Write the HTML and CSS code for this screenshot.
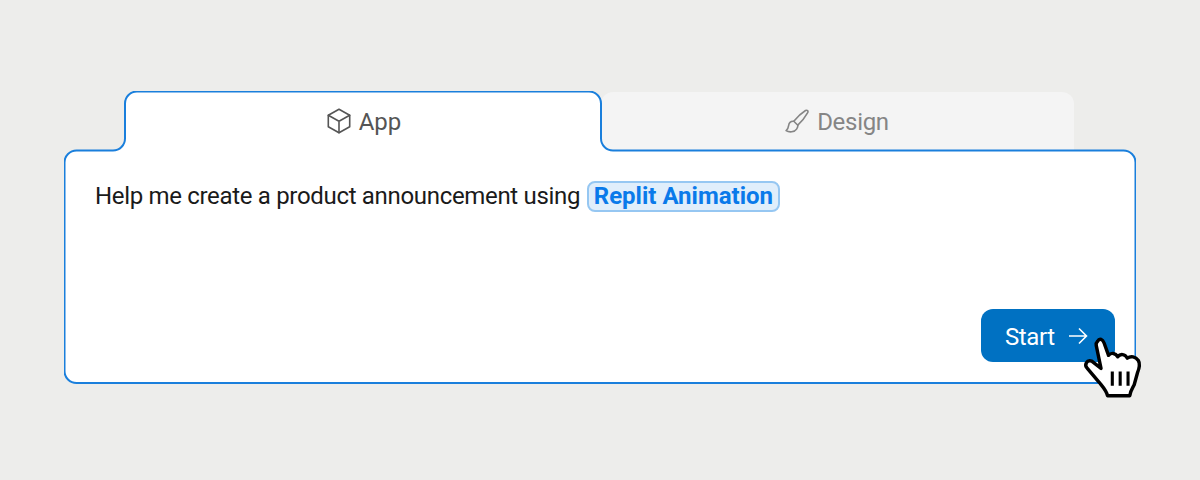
FILE: index.html
```html
<!DOCTYPE html>
<html lang="en">
<head>
<meta charset="utf-8">
<title>Replit prompt</title>
<link rel="stylesheet" href="styles.css">
</head>
<body>
<main class="stage">
  <svg class="frame" width="1072" height="294" viewBox="0 0 1072 294" aria-hidden="true">
    <path class="frame-line" d="M.5 71.5a12 12 0 0 1 12-12H49a12 12 0 0 0 12-12V12.5a12 12 0 0 1 12-12H525a12 12 0 0 1 12 12V47.5a12 12 0 0 0 12 12H1059.500a12 12 0 0 1 12 12V280a12 12 0 0 1-12 12H12.500a12 12 0 0 1-12-12Z"/>
  </svg>
  <nav class="tabs">
    <div class="tab tab-active">
      <svg class="tab-icon" width="24" height="26" viewBox="0 0 24 26" aria-hidden="true">
        <path d="M12 1.300 22.700 7.300V18.700L12 24.700 1.300 18.700V7.300Z"/>
        <path d="M1.300 7.300 12 13.200 22.700 7.300M12 13.200V24.700"/>
      </svg>
      <span class="tab-label">App</span>
    </div>
    <div class="tab tab-idle">
      <svg class="tab-icon" width="24" height="24" viewBox="0 0 24 24" aria-hidden="true">
        <path d="M20.500 1.500C22.300.6 23.500 2 22.700 3.700 20 8.500 16.500 12.800 12.800 16.200L8.800 12.300C12.300 8 16 4.300 20.500 1.500Z"/>
        <path d="M8.800 12.300C5.800 12 4 14 3.600 16.600 3.300 18.800 2.700 20.500 1.100 21.600 4 23.500 9.500 23.300 11.600 20.100 12.700 18.600 13 17.300 12.800 16.200"/>
      </svg>
      <span class="tab-label">Design</span>
    </div>
  </nav>
  <section class="panel">
    <p class="prompt">Help me create a product announcement using <span class="pill">Replit Animation</span></p>
    <div class="actions">
      <button class="start" type="button">
        <span class="start-label">Start</span>
        <svg width="20" height="20" viewBox="0 0 20 20" aria-hidden="true">
          <path d="M1 10H18.500M11 2.500 18.500 10 11 17.500"/>
        </svg>
      </button>
    </div>
  </section>
  <svg class="cursor" width="77" height="77" viewBox="0 0 225 225" aria-hidden="true">
    <path class="hand" d="M66 36C72 25 81 30 85 41L98 77C106 68 118 70 125 81 133 71 146 73 153 85 163 78 177 80 185 92 190 100 188 115 182 130L173 163C168 173 162 180 160 195H95C92 180 82 170 70 155L36 115C26 105 34 89 49 94L76 115 62 48C61 43 63 39 66 36Z"/>
    <path class="hand-lines" d="M109 124V166M132 124V166M155 124V166"/>
  </svg>
</main>
</body>
</html>
```
FILE: styles.css
```css
* {
  box-sizing: border-box;
}

html,
body {
  margin: 0;
  height: 100%;
}

body {
  background: #ededeb;
  font-family: Roboto, "Liberation Sans", sans-serif;
  font-size: 24px;
  overflow: hidden;
}

.stage {
  position: relative;
  width: 1072px;
  margin-left: 64px;
  padding-top: 91px;
}

.frame {
  position: absolute;
  left: 0;
  top: 90.500px;
  z-index: 1;
  pointer-events: none;
}

.frame-line {
  fill: #fff;
  stroke: #1a7fdc;
  stroke-width: 2;
}

.tabs {
  display: flex;
  height: 60px;
  margin-left: 61px;
}

.tab {
  display: flex;
  align-items: center;
  justify-content: center;
  gap: 8px;
}

.tab-label {
  padding-top: 2px;
}

.tab-active {
  position: relative;
  z-index: 2;
  width: 476px;
  height: 60px;
  padding-left: 2px;
  color: #555;
}

.tab-idle {
  width: 473px;
  height: 59px;
  margin-top: 1px;
  padding-right: 1px;
  padding-bottom: 1px;
  border-radius: 12px 12px 0 0;
  background: #f4f4f4;
  color: #858585;
  letter-spacing: -.3px;
}

.tab-icon {
  fill: none;
  stroke: currentColor;
  stroke-width: 1.600;
  stroke-linejoin: round;
  stroke-linecap: round;
}

.panel {
  position: relative;
  z-index: 2;
  display: flex;
  flex-direction: column;
  justify-content: space-between;
  height: 232px;
  padding: 27px 21px 21px 31px;
}

.prompt {
  margin: 0;
  line-height: 36px;
  letter-spacing: -.32px;
  color: #1a1a1a;
}

.pill {
  display: inline-block;
  height: 31px;
  margin-left: 1px;
  padding: 0 5px;
  border: 2px solid #96c7f2;
  border-radius: 8px;
  background: #e0eefb;
  color: #0a7aea;
  font-weight: 700;
  line-height: 26px;
  letter-spacing: 0;
  vertical-align: 0;
}

.actions {
  display: flex;
  justify-content: flex-end;
}

.start {
  display: flex;
  align-items: center;
  gap: 13px;
  width: 134px;
  height: 53px;
  padding: 0 0 0 24px;
  border: 0;
  border-radius: 12px;
  background: #0071c2;
  color: #fff;
  font: inherit;
  letter-spacing: -.4px;
}

.start-label {
  padding-top: 2px;
}

.start svg {
  fill: none;
  stroke: currentColor;
  stroke-width: 1.600;
}

.cursor {
  position: absolute;
  left: 1011px;
  top: 329px;
  z-index: 3;
}

.hand {
  fill: #fff;
  stroke: #000;
  stroke-width: 10;
  stroke-linejoin: round;
}

.hand-lines {
  fill: none;
  stroke: #000;
  stroke-width: 9;
}
```
